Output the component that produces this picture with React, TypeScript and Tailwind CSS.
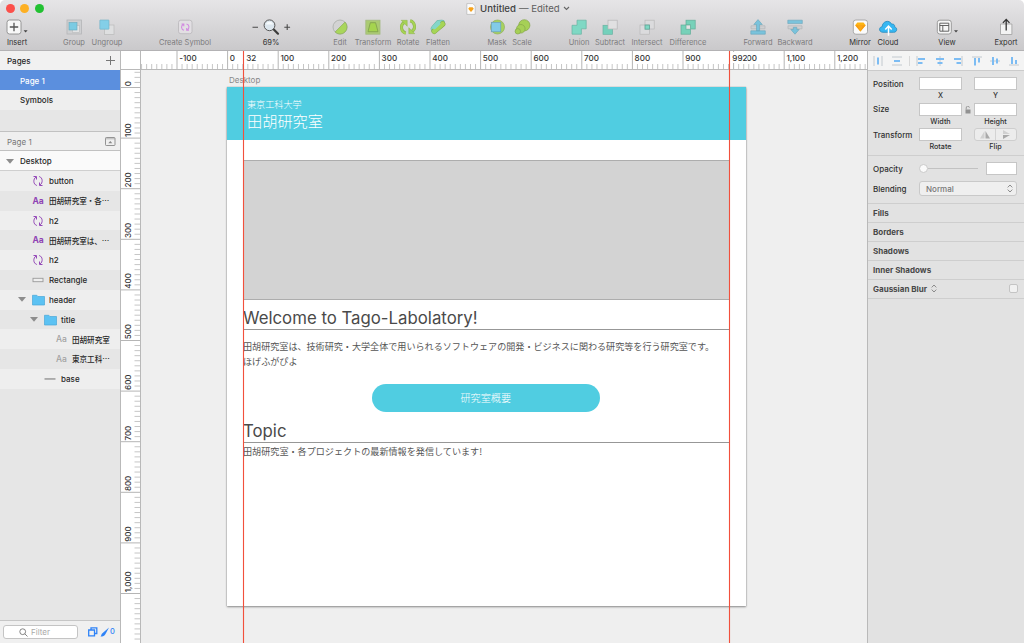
import type { ReactNode } from "react";

const range = (from: number, to: number) =>
  Array.from({ length: to - from + 1 }, (_, i) => from + i);

const STEP = 5.06;
const fmt = (n: number) => n.toLocaleString("en-US");

/* ---------- toolbar ---------- */

const G = ({ children }: { children: ReactNode }) => (
  <svg width="20" height="18" viewBox="0 0 20 18" fill="none" className="overflow-visible">
    {children}
  </svg>
);

const icons: Record<string, ReactNode> = {
  insert: (
    <G>
      <rect x="0" y="2" width="14" height="14" rx="2.5" fill="#f8f8f8" stroke="#8d8d8d" strokeWidth="0.9" />
      <path d="M7 4.8v8.4M2.8 9h8.4" stroke="#555" strokeWidth="1.3" />
      <path d="M16.6 12.2h4l-2 2.4z" fill="#444" />
    </G>
  ),
  group: (
    <G>
      <rect x="3" y="2" width="14.5" height="14" fill="#cfd0d2" stroke="#b4b5b7" strokeWidth="0.8" />
      <rect x="8.5" y="7.5" width="7" height="7" fill="#e2e3e4" stroke="#b9b9b9" strokeWidth="0.6" />
      <rect x="5" y="4.5" width="8" height="7.5" fill="#7bcbe3" stroke="#69a9bb" strokeWidth="0.6" />
    </G>
  ),
  ungroup: (
    <G>
      <rect x="7.5" y="7" width="9.5" height="9.5" fill="#dedfe0" stroke="#bababa" strokeWidth="0.7" />
      <rect x="2.8" y="2" width="9.2" height="9.2" rx="0.5" fill="#83cfe8" stroke="#70b0c4" strokeWidth="0.6" />
    </G>
  ),
  symbol: (
    <G>
      <rect x="3.5" y="2.2" width="13.5" height="13.5" rx="2.3" fill="#e2dfe3" stroke="#b9b6ba" strokeWidth="0.8" />
      <path d="M9 12.2c-3-.6-3.3-4.500-.7-6M6.500 6h2.300v2.200M11.500 6c3 .6 3.300 4.400.7 6M14 12.200h-2.300V10" stroke="#d28be0" strokeWidth="1.1" />
    </G>
  ),
  zoom: (
    <G>
      <path d="M-8.500 9.200h5.500M23.300 9.200h5.800M26.200 6.300v5.800" stroke="#4a4a4a" strokeWidth="1.100" />
      <path d="M12.800 11.500l4.200 4.200" stroke="#3b3b3b" strokeWidth="2.200" strokeLinecap="round" />
      <circle cx="8.500" cy="7.300" r="5.400" fill="#dce6ee" stroke="#555" strokeWidth="1" />
      <path d="M5 6.500a3.600 3.600 0 0 1 7 0z" fill="#f6fafc" />
    </G>
  ),
  edit: (
    <G>
      <circle cx="10" cy="9" r="7" fill="#d3d3d3" stroke="#a3a7a0" strokeWidth="0.700" />
      <path d="M15 4.100A7 7 0 0 1 5.100 14z" fill="#a9d65b" stroke="#8bac58" strokeWidth="0.700" />
    </G>
  ),
  transform: (
    <G>
      <rect x="2.800" y="2.200" width="14.200" height="14" fill="#abcb72" stroke="#a3ba80" strokeWidth="0.800" />
      <path d="M7.300 4.700h5.300l2.400 9H5z" fill="#a5d44f" stroke="#7e9d4c" strokeWidth="0.800" />
    </G>
  ),
  rotate: (
    <G>
      <path d="M7.800 15.200C2.800 13.800 2 7 6 4.600" stroke="#8fb151" strokeWidth="3" />
      <path d="M7.800 15.200C2.800 13.800 2 7 6 4.600" stroke="#a6d354" strokeWidth="2" />
      <path d="M3.200 2.300h6v6z" fill="#a6d354" stroke="#8fb151" strokeWidth="0.500" />
      <path d="M12.200 2.800c5 1.400 5.800 8.200 1.800 10.600" stroke="#8fb151" strokeWidth="3" />
      <path d="M12.200 2.800c5 1.400 5.800 8.200 1.800 10.600" stroke="#a6d354" strokeWidth="2" />
      <path d="M16.800 15.700h-6v-6z" fill="#a6d354" stroke="#8fb151" strokeWidth="0.500" />
    </G>
  ),
  flatten: (
    <G>
      <path d="M6 10.500L10.500 5.200 13.800 5" stroke="#6db3a2" strokeWidth="6.400" strokeLinecap="round" strokeLinejoin="round" />
      <path d="M6 10.500L10.500 5.200 13.800 5" stroke="#83d6c8" strokeWidth="5.400" strokeLinecap="round" strokeLinejoin="round" />
      <path d="M6.200 13.200L14.600 6" stroke="#85a948" strokeWidth="5.600" strokeLinecap="round" />
      <path d="M6.200 13.200L14.600 6" stroke="#a6d556" strokeWidth="4.600" strokeLinecap="round" />
      <path d="M6.300 9.200l4.200-4" stroke="#83d6c8" strokeWidth="4" strokeLinecap="round" />
    </G>
  ),
  mask: (
    <G>
      <circle cx="10.500" cy="9" r="7" fill="#a9d35d" stroke="#8fae5e" strokeWidth="0.700" />
      <rect x="4.300" y="4.300" width="9.500" height="9.500" fill="#82cbe8" stroke="#6c9fb8" strokeWidth="0.700" />
    </G>
  ),
  scale: (
    <G>
      <circle cx="12.300" cy="7.300" r="5.600" fill="#a6d056" stroke="#85a54b" strokeWidth="0.700" />
      <circle cx="8.800" cy="10.800" r="4.300" fill="#a6d056" stroke="#85a54b" strokeWidth="0.700" />
      <circle cx="5.800" cy="13.300" r="2.700" fill="#a6d056" stroke="#85a54b" strokeWidth="0.700" />
    </G>
  ),
  union: (
    <G>
      <path d="M8 2.200h9.200v8.600h-4.800v5.400H3V7.300h5z" fill="#7fd8c4" stroke="#69b3a2" strokeWidth="0.700" />
    </G>
  ),
  subtract: (
    <G>
      <rect x="3" y="7.300" width="9.500" height="9" fill="#74d0bb" stroke="#69b3a2" strokeWidth="0.700" />
      <rect x="8" y="2.200" width="9.200" height="8.800" fill="#e0e0e1" stroke="#b5b5b6" strokeWidth="0.700" />
    </G>
  ),
  intersect: (
    <G>
      <rect x="8" y="2.200" width="9.200" height="8.800" fill="#dbdbdd" stroke="#b8b8b9" strokeWidth="0.700" />
      <rect x="3" y="7" width="9.500" height="9.200" fill="#dbdbdd" stroke="#b8b8b9" strokeWidth="0.700" />
      <rect x="8" y="7" width="4.500" height="4.200" fill="#7fd8c4" stroke="#5ea293" strokeWidth="0.800" />
    </G>
  ),
  difference: (
    <G>
      <rect x="8" y="2.200" width="9.200" height="8.800" fill="#77d1b9" stroke="#63ad99" strokeWidth="0.700" />
      <rect x="3" y="7" width="9.500" height="9.200" fill="#77d1b9" stroke="#63ad99" strokeWidth="0.700" />
      <rect x="8" y="7" width="4.500" height="4.200" fill="#e4e4e4" stroke="#63ad99" strokeWidth="0.700" />
    </G>
  ),
  forward: (
    <G>
      <path d="M3 7.800h14v3H3z" fill="#cfd0d2" stroke="#b2b6b9" strokeWidth="0.700" />
      <path d="M2.800 12.800h14.500v3.400H2.800zM8.500 12.800V6.500H5.800L10 1.600l4.300 4.900h-2.700v6.300z" fill="#7ac3dc" stroke="#6aa4b9" strokeWidth="0.600" />
    </G>
  ),
  backward: (
    <G>
      <path d="M3 7.800h14v3H3z" fill="#cfd0d2" stroke="#b2b6b9" strokeWidth="0.700" />
      <path d="M2.800 2.200h14.500v3.400H2.800zM8.300 9.300h3.500v2.200h2.400L10 16.200l-4.200-4.700h2.500z" fill="#7ac3dc" stroke="#6aa4b9" strokeWidth="0.600" />
    </G>
  ),
  mirror: (
    <G>
      <rect x="3.300" y="2" width="14.200" height="14.200" rx="2.500" fill="#fbfbfb" stroke="#a3a3a3" strokeWidth="0.900" />
      <path d="M5.200 7.200L7.300 4.600h6.200l2.200 2.600-5.300 6.200z" fill="#fdb515" />
      <path d="M5.200 7.200h10.500l-5.300 6.200z" fill="#f79a10" />
      <path d="M7.700 7.200h5.300l-2.600 6.200z" fill="#fba919" />
    </G>
  ),
  cloud: (
    <G>
      <path d="M5 14.300c-4.300 0-4.600-5.300-.8-5.600C4.100 3.600 11.200 1 13.600 6.100c3-.3 3.200 1.600 3 2.800 3.200.7 2.700 5.400-.9 5.400z" fill="#36b7f2" stroke="#2889bd" strokeWidth="0.800" />
      <path d="M10.500 17.800V9.300M7.300 11.500l3.200-3.400 3.200 3.400" stroke="#fff" strokeWidth="1.500" />
    </G>
  ),
  view: (
    <G>
      <rect x="0.300" y="2.200" width="14" height="13.800" rx="2.500" fill="#f7f7f7" stroke="#929292" strokeWidth="0.900" />
      <path d="M2.800 5.200h9v8h-9zM2.800 7.500h9M5.800 7.500v5.700" stroke="#555" strokeWidth="0.900" />
      <path d="M17 12.200h4l-2 2.400z" fill="#444" />
    </G>
  ),
  export: (
    <G>
      <path d="M4.500 6h11.400v10.500H4.500z" fill="#f3f3f3" stroke="#a6a6a6" strokeWidth="0.900" />
      <path d="M10.200 12.500V1.800M6.900 4.900l3.300-3.500 3.300 3.500" stroke="#333" strokeWidth="1.300" />
    </G>
  ),
};

const tools: [string, string, string, boolean][] = [
  ["insert", "Insert", "ml-[7px]", true],
  ["group", "Group", "ml-[37px]", false],
  ["ungroup", "Ungroup", "ml-[13px]", false],
  ["symbol", "Create Symbol", "ml-[58px]", false],
  ["zoom", "69%", "ml-[66px]", true],
  ["edit", "Edit", "ml-[49px]", false],
  ["transform", "Transform", "ml-[13px]", false],
  ["rotate", "Rotate", "ml-[15px]", false],
  ["flatten", "Flatten", "ml-[10px]", false],
  ["mask", "Mask", "ml-[39px]", false],
  ["scale", "Scale", "ml-[5px]", false],
  ["union", "Union", "ml-[37px]", false],
  ["subtract", "Subtract", "ml-[11px]", false],
  ["intersect", "Intersect", "ml-[17px]", false],
  ["difference", "Difference", "ml-[21px]", false],
  ["forward", "Forward", "ml-[50px]", false],
  ["backward", "Backward", "ml-[17px]", false],
  ["mirror", "Mirror", "ml-[45px]", true],
  ["cloud", "Cloud", "ml-[8px]", true],
  ["view", "View", "ml-[39px]", true],
  ["export", "Export", "ml-[39px]", true],
];

const Toolbar = () => (
  <header className="flex h-[51px] shrink-0 flex-col rounded-t-[5px] border-b border-[#b3b2b4] bg-linear-to-b from-[#e6e5e7] to-[#cac9cb]">
    <div className="grid h-[17px] shrink-0 grid-cols-[1fr_auto_1fr] items-center pl-[5.800px]">
      <div className="flex gap-[5.600px]">
        <span className="size-[9px] rounded-full bg-[#fc504b]" />
        <span className="size-[9px] rounded-full bg-[#fdb024]" />
        <span className="size-[9px] rounded-full bg-[#22c132]" />
      </div>
      <div className="flex items-center pl-[6px] pt-px text-[9.600px] font-medium text-[#404040]">
        <svg width="10" height="12" viewBox="0 0 10 12" className="mr-[4px]">
          <path d="M.8.600h6L9.200 3v8.400H.8z" fill="#fcfcfc" stroke="#b5b5b5" strokeWidth="0.700" />
          <path d="M2.200 5.800l1.200-1.600h3.200l1.200 1.600L5 9z" fill="#f7a21b" />
        </svg>
        Untitled <span className="ml-[3px] font-normal text-[#5e5e5e]">— Edited</span>
        <svg width="7" height="5" viewBox="0 0 7 5" className="ml-[3px]" fill="none">
          <path d="M1 1l2.500 2.500L6 1" stroke="#666" strokeWidth="1.100" />
        </svg>
      </div>
    </div>
    <div className="flex pt-px">
      {tools.map(([id, label, margin, active]) => (
        <div key={id} className={`flex w-5 shrink-0 flex-col items-center ${margin}`}>
          {icons[id]}
          <span
            className={`mt-[1.500px] h-[10px] whitespace-nowrap text-[7.500px] leading-[10px] ${active ? "text-[#303030]" : "text-[#7c7b7d]"}`}
          >
            {label}
          </span>
        </div>
      ))}
    </div>
  </header>
);

/* ---------- sidebar ---------- */

const SymbolIcon = () => (
  <svg width="12" height="12" viewBox="0 0 12 12" fill="none" stroke="#9449b8" strokeWidth="1">
    <path d="M4.800 10.500C1 9.300 1 4 4 2M1.500 1.500h3v3M7.200 1.500c3.800 1.200 3.800 6.500.8 8.500M10.500 10.500h-3v-3" />
  </svg>
);
const Folder = () => (
  <svg width="13" height="12" viewBox="0 0 13 12">
    <path d="M.5 1.300h4.300L6 2.500h6.500V11H.5z" fill="#5cc2f3" stroke="#49a7d8" strokeWidth="0.700" />
  </svg>
);
const Triangle = () => (
  <svg width="8" height="5" viewBox="0 0 8 5">
    <path d="M0 0h8L4 4.800z" fill="#8d8d8d" />
  </svg>
);
const Bar = ({ thick }: { thick?: boolean }) => (
  <svg width="12" height="6" viewBox="0 0 12 6">
    {thick ? (
      <rect x="1" y="1.300" width="10" height="3.400" fill="#eee" stroke="#9a9a9a" strokeWidth="0.900" />
    ) : (
      <rect x="0.500" y="2.200" width="11" height="1.500" fill="#9a9a9a" />
    )}
  </svg>
);
const Aa = ({ dim }: { dim?: boolean }) => (
  <span className={dim ? "pl-px text-[8.500px] font-medium text-[#a2a2a2]" : "pl-[0.500px] text-[8.500px] font-bold text-[#8f43b4]"}>Aa</span>
);

const layers: { pad: string; icon: ReactNode; label: string; open?: boolean; ja?: boolean }[] = [
  { pad: "pl-[32px]", icon: <SymbolIcon />, label: "button" },
  { pad: "pl-[32px]", icon: <Aa />, label: "田胡研究室・各…", ja: true },
  { pad: "pl-[32px]", icon: <SymbolIcon />, label: "h2" },
  { pad: "pl-[32px]", icon: <Aa />, label: "田胡研究室は、…", ja: true },
  { pad: "pl-[32px]", icon: <SymbolIcon />, label: "h2" },
  { pad: "pl-[32px]", icon: <Bar thick />, label: "Rectangle" },
  { pad: "pl-[18px]", icon: <Folder />, label: "header", open: true },
  { pad: "pl-[30px]", icon: <Folder />, label: "title", open: true },
  { pad: "pl-[55px]", icon: <Aa dim />, label: "田胡研究室", ja: true },
  { pad: "pl-[55px]", icon: <Aa dim />, label: "東京工科…", ja: true },
  { pad: "pl-[44px]", icon: <Bar />, label: "base" },
];

const Sidebar = () => (
  <aside className="flex w-[121px] shrink-0 flex-col border-r border-[#b9b9b9] bg-[#e6e6e6] text-[8px] font-medium text-[#262626]">
    <div className="flex h-[19px] items-center justify-between bg-[#f1f1f1] pl-[7px] pr-[5px]">
      Pages
      <svg width="9" height="9" viewBox="0 0 9 9" stroke="#777" strokeWidth="1">
        <path d="M4.500 0v9M0 4.500h9" />
      </svg>
    </div>
    <div className="flex h-5 items-center bg-[#5b8fde] pl-[20px] pt-px text-white">Page 1</div>
    <div className="flex h-5 items-center bg-[#eee] pl-[20px] pt-[0.500px]">Symbols</div>
    <div className="h-[21px]" />
    <div className="flex h-5 items-center justify-between border-y border-[#c1c1c1] bg-[#efefef] pl-[7px] pr-[4px] pt-px font-normal text-[#777]">
      Page 1
      <svg width="11" height="9" viewBox="0 0 11 9" fill="none">
        <rect x="0.500" y="0.500" width="9.500" height="8" rx="0.800" stroke="#888" strokeWidth="0.900" />
        <path d="M0.500 1.800h9.500" stroke="#999" strokeWidth="0.700" />
        <path d="M3.300 6.300h4L5.300 4z" fill="#888" />
      </svg>
    </div>
    <div className="flex h-5 items-center gap-[6px] border-b border-[#cfcfcf] bg-[#fafafa] pl-[6px] pt-px">
      <Triangle />
      Desktop
    </div>
    {layers.map((l, i) => (
      <div key={i} className={`flex h-[19.800px] shrink-0 items-center pt-[0.500px] ${i % 2 ? "bg-[#e6e6e6]" : "bg-[#eee]"} ${l.pad}`}>
        {l.open && (
          <span className="mr-[6px]">
            <Triangle />
          </span>
        )}
        <span className="flex w-[17px] shrink-0 items-center">{l.icon}</span>
        <span className={l.ja ? "whitespace-nowrap text-[7.550px] leading-[12px] font-['Noto_Sans_CJK_JP',sans-serif]" : "whitespace-nowrap"}>
          {l.label}
        </span>
      </div>
    ))}
    <div className="mt-auto flex h-[23px] items-center border-t border-[#c6c6c6] bg-[#f0f0f0] pl-[3px]">
      <div className="flex h-[14px] w-[75px] items-center rounded-[3px] border border-[#c4c4c4] bg-white pl-[15px] font-normal text-[#a9a9a9]">
        <svg width="9" height="9" viewBox="0 0 9 9" fill="none" stroke="#777" strokeWidth="0.900" className="mr-[3px]">
          <circle cx="3.700" cy="3.700" r="2.900" />
          <path d="M5.800 5.800l2.700 2.700" />
        </svg>
        Filter
      </div>
      <svg width="21" height="10" viewBox="0 0 21 10" fill="none" className="ml-[10px]">
        <path d="M.7 3h5.800v5.800H.7zM3 3V.8h5.800v5.700H6.500" stroke="#2f83f7" strokeWidth="1.300" />
        <path d="M12.500 9.500c1-.3.700-2.700 2.200-3.400L21 .5 17.500 7c-1 2-2.500 2.500-5 2.500z" fill="#2f83f7" />
      </svg>
      <span className="ml-px text-[7.500px] text-[#2f83f7]">0</span>
    </div>
  </aside>
);

/* ---------- rulers ---------- */

const TopRuler = () => (
  <svg width="746" height="19" viewBox="121 51 746 19" className="block shrink-0 bg-white" fontSize="8.100" fontWeight="500" fill="#333">
    {range(-17, 126).map((n) => {
      const x = 227.6 + n * STEP;
      const major = n % 10 === 0;
      return <path key={n} d={`M${x} ${major ? 51 : 64}V69`} stroke={major ? "#b5b5b5" : "#c6c6c6"} strokeWidth="1" />;
    })}
    {range(-1, 12).map((n) => (
      <text key={n} x={227.6 + n * 50.6 + 2.2} y="60.600">
        {fmt(n * 100)}
      </text>
    ))}
    <rect x="244" y="52" width="14" height="11" fill="#fff" />
    <text x="246.300" y="60.600">32</text>
    <rect x="730" y="52" width="17.500" height="11" fill="#fff" />
    <text x="732.300" y="60.600">992</text>
    <path d="M140.500 51V70M121 69.500H867" stroke="#b9b9b9" />
  </svg>
);

const SideRuler = () => (
  <svg width="20" height="573" viewBox="121 70 20 573" className="block shrink-0 bg-white" fontSize="8" fontWeight="500" fill="#333">
    {range(-3, 110).map((n) => {
      const y = 87.5 + n * STEP;
      const major = n % 10 === 0;
      return <path key={n} d={`M${major ? 121 : 134.5} ${y}H140`} stroke={major ? "#b5b5b5" : "#c6c6c6"} strokeWidth="1" />;
    })}
    {range(0, 10).map((n) => (
      <text key={n} transform={`translate(130.800 ${87.5 + n * 50.6 - 1.2}) rotate(-90)`}>
        {fmt(n * 100)}
      </text>
    ))}
    <path d="M140.500 70V643" stroke="#b9b9b9" />
  </svg>
);

/* ---------- canvas ---------- */

const headingClass =
  "h-[24px] whitespace-nowrap border-b border-[#979797] text-[16.800px] leading-[24px] text-[#4a4a4a] font-['Inter',sans-serif]";

const Artboard = () => (
  <div className="flex h-[519px] w-[518.500px] flex-col bg-white text-[#555] shadow-[0_1px_2px_rgba(0,0,0,0.4),0_0_1px_rgba(0,0,0,0.3)] font-['Noto_Sans_CJK_JP',sans-serif]">
    <div className="flex h-[53px] flex-col bg-[#50cde1] pl-[20px] pt-[11px] font-light text-white">
      <span className="text-[9.100px] leading-[13px]">東京工科大学</span>
      <span className="text-[15.200px] leading-[18px]">田胡研究室</span>
    </div>
    <div className="flex flex-col px-[16px]">
      <div className="mt-[20px] h-[140px] border border-[#adadad] bg-[#d3d3d3]" />
      <h2 className={`mt-[6px] ${headingClass}`}>Welcome to Tago-Labolatory!</h2>
      <p className="mt-[9px] h-[30px] whitespace-nowrap text-[9.080px] leading-[15.300px]">
        田胡研究室は、技術研究・大学全体で用いられるソフトウェアの開発・ビジネスに関わる研究等を行う研究室です。
        <br />
        ほげふがぴよ
      </p>
      <div className="mr-px mt-[15px] flex h-[28px] w-[228px] items-center justify-center self-center rounded-full bg-[#50cde1] text-[10.150px] font-light text-white">
        研究室概要
      </div>
      <h2 className={`mt-[7px] ${headingClass}`}>Topic</h2>
      <p className="mt-px text-[9.100px] leading-[15.300px]">田胡研究室・各プロジェクトの最新情報を発信しています!</p>
    </div>
  </div>
);

/* ---------- inspector ---------- */

const aligns = [
  "M1 0v10M9 0v10|M5 1.500v7",
  "M0 1h10M0 9h10|M2 5h6",
  "M1 0v10|M2 3h7M2 7h4.500",
  "M5 0v10|M1 3h8M2.500 7h5",
  "M9 0v10|M1 3h7M3.500 7h4.500",
  "M0 1h10|M3 2v7.500M7 2v4.500",
  "M0 5h10|M3 1v8M7 2.500v5",
  "M0 9h10|M3 1v7M7 4v4",
];

const Field = ({ className = "" }: { className?: string }) => (
  <div className={`h-[13px] border border-[#c6c6c6] bg-white ${className}`} />
);
const Caption = ({ children }: { children?: ReactNode }) => (
  <span className="text-center text-[7.200px] leading-[11px]">{children}</span>
);
const UpDown = () => (
  <svg width="6" height="9" viewBox="0 0 6 9" fill="none" stroke="#808080" strokeWidth="0.900">
    <path d="M.7 3.400L3 1l2.300 2.400M.7 5.600L3 8l2.300-2.400" />
  </svg>
);

const Inspector = () => (
  <aside className="flex w-[157px] shrink-0 flex-col border-l border-[#b9b9b9] bg-[#e2e2e2] text-[8px] font-medium text-[#303030]">
    <div className="flex h-[20px] shrink-0 items-center border-b border-[#cbcbcb] bg-[#f4f4f4] pl-[4.500px]">
      {aligns.map((a, i) => (
        <span
          key={i}
          className={`flex shrink-0 items-center ${i === 2 ? "mr-[8.500px] border-l border-[#d8d8d8] pl-[6px]" : i === 1 ? "mr-[7px]" : i === 0 ? "mr-[9.500px]" : "mr-[8.500px]"}`}
        >
          <svg width="10" height="10" viewBox="0 0 10 10" fill="none">
            <path d={a.split("|")[0]} stroke="#bcc4cb" strokeWidth="0.900" />
            <path d={a.split("|")[1]} stroke="#7cbcf3" strokeWidth="2" />
          </svg>
        </span>
      ))}
    </div>
    <div className="grid shrink-0 grid-cols-[46px_43px_12px_43px] grid-rows-[13px_13px_13px_12px_13px_14px] border-b border-[#cecece] pl-[5px] pt-[6px]">
      <span className="leading-[14px]">Position</span>
      <Field />
      <span />
      <Field />
      <span />
      <Caption>X</Caption>
      <span />
      <Caption>Y</Caption>
      <span className="leading-[13px]">Size</span>
      <Field />
      <span className="flex items-center justify-center">
        <svg width="6" height="8" viewBox="0 0 6 8" fill="none">
          <rect x="0.500" y="3.500" width="5" height="4" fill="#929292" />
          <path d="M1.200 3.500V2a1.600 1.600 0 0 1 3.200-.3" stroke="#929292" strokeWidth="0.900" />
        </svg>
      </span>
      <Field />
      <span />
      <Caption>Width</Caption>
      <span />
      <Caption>Height</Caption>
      <span className="leading-[15px]">Transform</span>
      <Field />
      <span />
      <div className="flex h-[13px] items-center rounded-[3px] border border-[#cecece] bg-[#ececec]">
        <span className="flex h-full flex-1 items-center justify-center border-r border-[#d3d3d3]">
          <svg width="10" height="8" viewBox="0 0 10 8">
            <path d="M4.500 0v7.500H0z" fill="#d0d0d0" />
            <path d="M5.500 0v7.500H10z" fill="#a8a8a8" />
          </svg>
        </span>
        <span className="flex flex-1 items-center justify-center">
          <svg width="9" height="9" viewBox="0 0 9 9">
            <path d="M1 0v4h7z" fill="#d0d0d0" />
            <path d="M1 9V5h7z" fill="#a8a8a8" />
          </svg>
        </span>
      </div>
      <span />
      <Caption>Rotate</Caption>
      <span />
      <Caption>Flip</Caption>
    </div>
    <div className="flex h-[47.500px] shrink-0 flex-col border-b border-[#cecece] pl-[5px] pr-[7px] pt-[6px]">
      <div className="flex h-[13px] items-center">
        <span className="w-[46px]">Opacity</span>
        <span className="flex flex-1 items-center">
          <span className="size-[9px] rounded-full border border-[#cacaca] bg-[#fafafa]" />
          <span className="h-[1.500px] w-[50px] bg-[#c2c2c2]" />
        </span>
        <Field className="w-[31px]" />
      </div>
      <div className="mt-[6px] flex h-[15px] items-center">
        <span className="w-[46px]">Blending</span>
        <span className="flex h-[15px] flex-1 items-center justify-between rounded-[3px] border border-[#c9c9c9] bg-[#efefef] pl-[6px] pr-[3px] text-[#777]">
          Normal
          <UpDown />
        </span>
      </div>
    </div>
    {["Fills", "Borders", "Shadows", "Inner Shadows", "Gaussian Blur"].map((t) => (
      <div key={t} className="flex h-[19.100px] shrink-0 items-center border-b border-[#cecece] pl-[5px] pr-[6px] font-bold text-[#484848]">
        {t}
        {t === "Gaussian Blur" && (
          <>
            <span className="ml-[4px]">
              <UpDown />
            </span>
            <span className="ml-auto size-[9px] rounded-[2px] border border-[#c4c4c4] bg-[#f1f1f1]" />
          </>
        )}
      </div>
    ))}
  </aside>
);

const Guide = ({ className }: { className: string }) => (
  <div className={`absolute bottom-0 top-[51px] w-px bg-[#f2503c] shadow-[0_0_1px_rgba(242,80,60,0.55)] ${className}`} />
);

export default function App() {
  return (
    <div className="relative flex h-[643px] w-[1024px] flex-col overflow-hidden bg-white font-['Inter','Noto_Sans_CJK_JP',sans-serif]">
      <Toolbar />
      <div className="flex min-h-0 flex-1">
        <Sidebar />
        <main className="flex w-[746px] shrink-0 flex-col">
          <TopRuler />
          <div className="flex min-h-0 flex-1">
            <SideRuler />
            <div className="flex-1 bg-[#efefef] pl-[86px] pt-[4px]">
              <div className="h-[13px] pl-[2px] text-[8px] leading-[12px] text-[#888]">Desktop</div>
              <Artboard />
            </div>
          </div>
        </main>
        <Inspector />
      </div>
      <Guide className="left-[243px]" />
      <Guide className="left-[729px]" />
    </div>
  );
}
